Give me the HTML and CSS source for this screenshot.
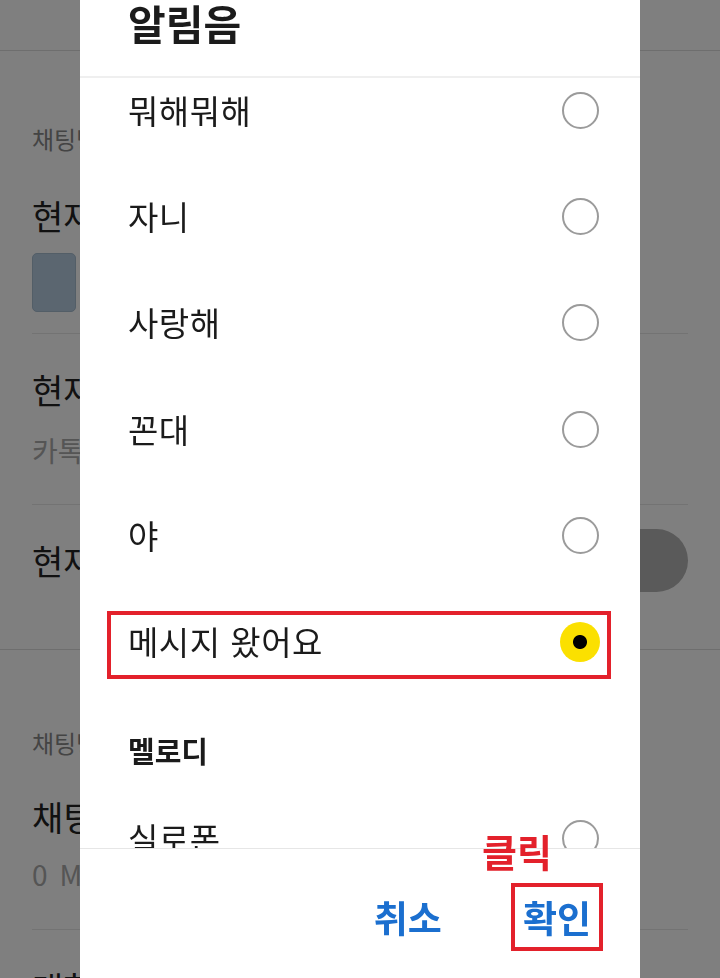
FILE: index.html
```html
<!DOCTYPE html>
<html lang="ko">
<head>
  <meta charset="UTF-8">
  <meta name="viewport" content="width=device-width, initial-scale=1.0">
  <title>채팅방 설정 - 알림음</title>
  <link rel="stylesheet" href="styles.css">
</head>
<body>
  <div class="page">
    <div class="topbar"></div>

    <div class="section">
      <div class="section-title">채팅방 설정</div>

      <div class="setting setting-bg">
        <div class="setting-name">현재 채팅방 배경화면</div>
        <div class="swatch"></div>
      </div>

      <div class="setting setting-sound">
        <div class="setting-name">현재 채팅방 알림음</div>
        <div class="setting-value">카톡</div>
      </div>

      <div class="setting setting-toggle">
        <div class="setting-name">현재 채팅방 알림</div>
        <div class="toggle"></div>
      </div>
    </div>

    <div class="section">
      <div class="section-title">채팅방 관리</div>

      <div class="setting setting-size">
        <div class="setting-name">채팅방 용량 관리</div>
        <div class="setting-value">0 MB</div>
      </div>

      <div class="setting setting-last">
        <div class="setting-name">대화 내용 내보내기</div>
      </div>
    </div>
  </div>

  <div class="dim">
    <div class="dialog">
      <div class="dialog-header">알림음</div>

      <div class="dialog-list">
        <div class="list-inner">
          <div class="sound-row"><span>뭐해뭐해</span><span class="radio"></span></div>
          <div class="sound-row"><span>자니</span><span class="radio"></span></div>
          <div class="sound-row"><span>사랑해</span><span class="radio"></span></div>
          <div class="sound-row"><span>꼰대</span><span class="radio"></span></div>
          <div class="sound-row"><span>야</span><span class="radio"></span></div>
          <div class="sound-row selected"><span>메시지 왔어요</span><span class="radio checked"></span></div>
          <div class="group-title">멜로디</div>
          <div class="sound-row"><span>실로폰</span><span class="radio"></span></div>
          <div class="sound-row"><span>피아노</span><span class="radio"></span></div>
        </div>
      </div>

      <div class="dialog-footer">
        <span class="hint">클릭</span>
        <button class="btn">취소</button>
        <button class="btn marked">확인</button>
      </div>
    </div>
  </div>
</body>
</html>
```

FILE: styles.css
```css
body {
  margin: 0;
  padding: 0;
  font-family: "Noto Sans CJK KR", "Noto Sans", sans-serif;
  background-color: #ffffff;
  color: #222222;
  overflow: hidden;
}

.page {
  width: 720px;
}

.topbar {
  height: 50px;
  border-bottom: 1px solid #dcdcdc;
}

.section {
  border-bottom: 1px solid #dcdcdc;
}

.section-title {
  padding: 72px 32px 0;
  font-size: 24px;
  line-height: 32px;
  color: #888888;
}

.section + .section .section-title {
  padding-top: 77px;
}

.setting {
  margin: 0 32px;
  border-bottom: 1px solid #e6e6e6;
}

.setting-name {
  font-size: 34px;
  line-height: 44px;
  color: #222222;
  white-space: nowrap;
}

.setting-value {
  font-size: 28px;
  line-height: 36px;
  color: #aaaaaa;
}

.setting-bg {
  padding: 39px 0 21px;
}

.swatch {
  width: 42px;
  height: 57px;
  margin-top: 15px;
  background-color: #b6cce0;
  border: 1px solid #a6bccf;
  border-radius: 5px;
}

.setting-sound {
  padding: 34px 0 36px;
}

.setting-sound .setting-value {
  margin-top: 20px;
}

.setting-toggle {
  display: flex;
  justify-content: space-between;
  align-items: center;
  padding: 24px 0 57px;
  border-bottom: none;
}

.toggle {
  width: 110px;
  height: 63px;
  border-radius: 32px;
  background-color: #b4b4b4;
}

.setting-size {
  padding: 36px 0 37px;
}

.setting-size .setting-value {
  margin-top: 17px;
  letter-spacing: 2px;
}

.setting-last {
  padding: 36px 0 20px;
  border-bottom: none;
}

/* dialog */

.dim {
  position: fixed;
  left: 0;
  top: 0;
  width: 100%;
  height: 100%;
  background-color: rgba(0, 0, 0, 0.5);
  display: flex;
  justify-content: center;
}

.dialog {
  width: 560px;
  height: 100%;
  background-color: #ffffff;
  display: flex;
  flex-direction: column;
  color: #1b1b1b;
}

.dialog-header {
  height: 74px;
  padding: 2px 48px 0;
  font-size: 41px;
  line-height: 41px;
  font-weight: bold;
  border-bottom: 2px solid #efefef;
}

.dialog-list {
  flex: 1;
  overflow: hidden;
}

.list-inner {
  margin-top: -21.2px;
}

.sound-row {
  position: relative;
  height: 106.4px;
  padding: 0 41px 0 48px;
  display: flex;
  justify-content: space-between;
  align-items: center;
  font-size: 33px;
  line-height: 33px;
  letter-spacing: 0.5px;
}

.sound-row.selected::after {
  content: "";
  position: absolute;
  left: 27px;
  right: 29px;
  top: 22px;
  bottom: 16px;
  border: 4px solid #e3212b;
}

.radio {
  width: 33px;
  height: 33px;
  border: 2.5px solid #9b9b9b;
  border-radius: 50%;
}

.radio.checked {
  width: 40px;
  height: 40px;
  margin-right: -1px;
  border: none;
  background: radial-gradient(circle, #000000 0, #000000 6.5px, #fbe000 7.5px);
}

.group-title {
  height: 70px;
  padding: 20px 48px 0;
  display: flex;
  align-items: center;
  font-size: 29px;
  font-weight: bold;
}

.dialog-footer {
  position: relative;
  height: 83px;
  padding: 46px 49px 0 0;
  border-top: 1px solid #e6e6e6;
  display: flex;
  justify-content: flex-end;
  align-items: flex-start;
  gap: 81px;
}

.btn {
  padding: 0;
  border: none;
  background: none;
  font-family: "Noto Sans CJK KR", "Noto Sans", sans-serif;
  font-size: 37px;
  line-height: 44px;
  font-weight: bold;
  color: #1b6fcf;
  cursor: pointer;
}

.btn.marked {
  outline: 4px solid #e3212b;
  outline-offset: 8px;
}

.hint {
  position: absolute;
  left: 402px;
  top: -17px;
  font-size: 38px;
  line-height: 38px;
  font-weight: bold;
  color: #e3212b;
}
```
